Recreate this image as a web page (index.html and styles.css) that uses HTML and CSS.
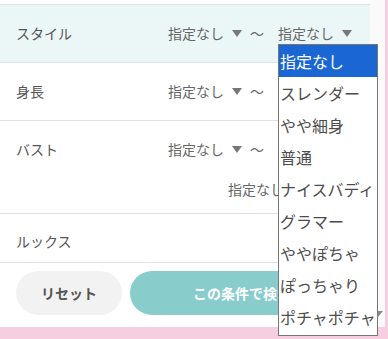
FILE: index.html
```html
<!DOCTYPE html>
<html lang="ja">
<head>
    <meta charset="UTF-8">
    <meta name="viewport" content="width=device-width, initial-scale=1.0">
    <title>絞り込み検索</title>
    <link rel="stylesheet" href="styles.css">
</head>
<body>
    <div class="panel">
        <div class="main">
            <div class="row active">
                <span class="label">スタイル</span>
                <div class="range">
                    <span class="pick">指定なし</span>
                    <span class="tilde">〜</span>
                    <span class="pick">指定なし</span>
                </div>
            </div>
            <div class="row">
                <span class="label">身長</span>
                <div class="range">
                    <span class="pick">指定なし</span>
                    <span class="tilde">〜</span>
                    <span class="pick">指定なし</span>
                </div>
            </div>
            <div class="row tall">
                <span class="label">バスト</span>
                <div class="stack">
                    <div class="range">
                        <span class="pick">指定なし</span>
                        <span class="tilde">〜</span>
                        <span class="pick">指定なし</span>
                    </div>
                    <div class="range cup">
                        <span class="pick">指定なし</span>
                        <span class="unit">カップ</span>
                    </div>
                </div>
            </div>
            <div class="row looks">
                <span class="label">ルックス</span>
            </div>

            <div class="actions">
                <button class="btn reset">リセット</button>
                <button class="btn search">この条件で検索</button>
            </div>
        </div>
        <div class="scrollbar">
            <span class="arrow"></span>
        </div>
    </div>

    <!-- open dropdown of the second style select -->
    <ul class="dropdown">
        <li class="selected">指定なし</li>
        <li>スレンダー</li>
        <li>やや細身</li>
        <li>普通</li>
        <li>ナイスバディ</li>
        <li>グラマー</li>
        <li>ややぽちゃ</li>
        <li>ぽっちゃり</li>
        <li>ポチャポチャ</li>
    </ul>
</body>
</html>
```

FILE: styles.css
```css
:root {
    --pink: #f7cde0;
    --line: #e0e0e0;
    --text: #555;
    --muted: #666;
    --teal: #88cdcc;
    --active-row: #ebf7f7;
    --option-blue: #1a66d2;
}

* {
    box-sizing: border-box;
}

body {
    margin: 0;
    background: var(--pink);
    font-family: "Noto Sans CJK JP", "Noto Sans", sans-serif;
    color: var(--text);
    font-size: 14px;
    overflow: hidden;
}

.panel {
    display: flex;
    width: 385px;
    height: 327px;
    background: #fff;
}

.main {
    width: 370px;
    padding-top: 4px;
}

.scrollbar {
    width: 15px;
    background: #fafafa;
    display: flex;
    flex-direction: column;
    justify-content: flex-end;
    align-items: center;
    padding-bottom: 10px;
}

.arrow {
    width: 0;
    height: 0;
    border-left: 5px solid transparent;
    border-right: 5px solid transparent;
    border-top: 6px solid #8a8a8a;
}

.row {
    display: flex;
    align-items: flex-start;
    padding: 18px 18px 19px 16px;
    border-top: 1px solid var(--line);
    line-height: 20px;
}

.row.active {
    background: var(--active-row);
}

.row.tall {
    padding-bottom: 14px;
}

.row.looks {
    padding-top: 17px;
    padding-bottom: 11px;
    border-bottom: 1px solid var(--line);
}

.label {
    color: var(--text);
}

.stack {
    margin-left: auto;
    display: flex;
    flex-direction: column;
    align-items: flex-end;
    gap: 20px;
}

.range {
    margin-left: auto;
    display: flex;
    align-items: center;
    color: var(--muted);
}

.range.cup {
    gap: 8px;
}

.pick {
    display: flex;
    align-items: center;
    gap: 8px;
}

.pick::after {
    content: "";
    width: 0;
    height: 0;
    border-left: 5px solid transparent;
    border-right: 5px solid transparent;
    border-top: 7px solid #777;
}

.tilde {
    margin: 0 14px 0 8px;
}

.actions {
    display: flex;
    gap: 8px;
    padding: 8px 16px 0;
}

.btn {
    height: 44px;
    border: none;
    border-radius: 22px;
    font-family: inherit;
    font-size: 14px;
    font-weight: bold;
}

.btn.reset {
    width: 106px;
    background: #f2f2f2;
    color: var(--text);
}

.btn.search {
    flex: 1;
    background: var(--teal);
    color: #fff;
}

.dropdown {
    position: absolute;
    left: 278px;
    top: 44px;
    width: 100px;
    margin: 0;
    padding: 0 0 2px;
    list-style: none;
    background: #fff;
    border: 1px solid #767676;
    font-size: 16px;
    color: #4d4d4d;
}

.dropdown li {
    height: 32px;
    line-height: 32px;
    padding: 0 1px;
    white-space: nowrap;
}

.dropdown li.selected {
    background: var(--option-blue);
    color: #fff;
}
```
